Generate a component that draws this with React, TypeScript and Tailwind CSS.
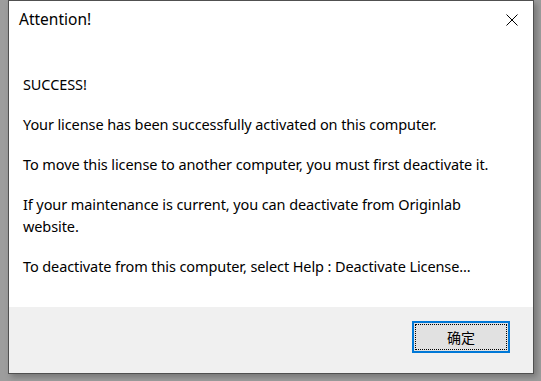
import React from 'react';

const lines: string[] = [
  'SUCCESS!',
  'Your license has been successfully activated on this computer.',
  'To move this license to another computer, you must first deactivate it.',
];

export default function App() {
  return (
    <div className="w-[541px] h-[381px] bg-[#9d9d9d] pl-2 overflow-hidden" style={{ fontFamily: '"Noto Sans", "Noto Sans CJK SC", sans-serif' }}>
      <div className="w-[526px] h-[374px] border border-[#505050] bg-white flex flex-col shadow-[3px_3px_6px_rgba(0,0,0,0.25)]">
        {/* title bar */}
        <div className="h-[38px] flex items-start justify-between">
          <div className="pl-[10px] pt-[8px] text-[15.5px] leading-[20px] text-black">Attention!</div>
          <div className="pr-[15px] pt-[13px]">
            <svg width="12" height="12" viewBox="0 0 12 12">
              <path d="M0.5 0.5L11.5 11.5M11.5 0.5L0.5 11.5" stroke="#000" strokeWidth="1" />
            </svg>
          </div>
        </div>

        {/* message */}
        <div className="flex-1 pl-[14px] pt-[34px] text-[14.5px] leading-[22px] tracking-[-0.1px] text-black flex flex-col gap-[18px]">
          {lines.map((t) => (
            <p key={t}>{t}</p>
          ))}
          <p>
            If your maintenance is current, you can deactivate from Originlab
            <br />
            website.
          </p>
          <p>To deactivate from this computer, select Help : Deactivate License...</p>
        </div>

        {/* footer */}
        <div className="h-[66px] bg-[#f0f0f0] flex justify-end pt-[14px] pr-[23px]">
          <button className="relative w-[98px] h-[32px] border-2 border-[#0078d7] bg-[#e1e1e1] text-[14px] text-black">
            <span className="absolute inset-[1px] border border-dotted border-black" />
            确定
          </button>
        </div>
      </div>
    </div>
  );
}
